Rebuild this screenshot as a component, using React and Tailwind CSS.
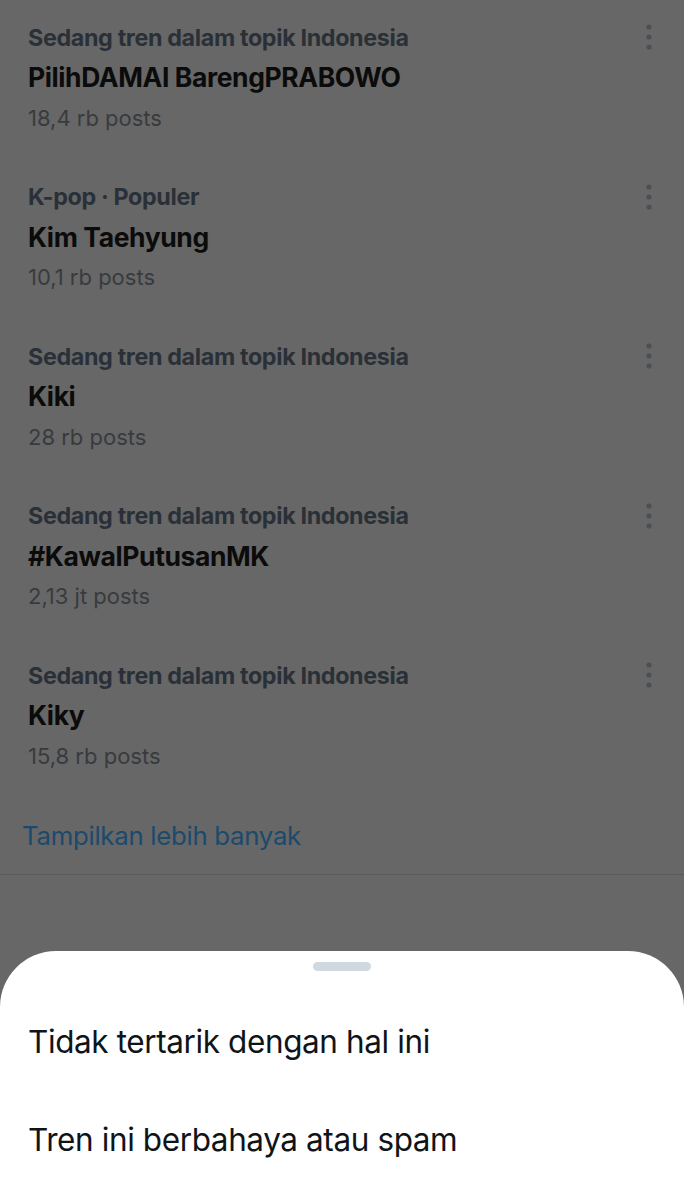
const items = [
  { cat: "Sedang tren dalam topik Indonesia", title: "PilihDAMAI BarengPRABOWO", count: "18,4 rb posts" },
  { cat: "K-pop · Populer", title: "Kim Taehyung", count: "10,1 rb posts" },
  { cat: "Sedang tren dalam topik Indonesia", title: "Kiki", count: "28 rb posts" },
  { cat: "Sedang tren dalam topik Indonesia", title: "#KawalPutusanMK", count: "2,13 jt posts" },
  { cat: "Sedang tren dalam topik Indonesia", title: "Kiky", count: "15,8 rb posts" },
];

function Dots() {
  return (
    <svg width="10" height="26" viewBox="0 0 10 26" className="mt-[-2px]">
      <circle cx="5" cy="3" r="2.6" fill="#4b5056" />
      <circle cx="5" cy="13" r="2.6" fill="#4b5056" />
      <circle cx="5" cy="23" r="2.6" fill="#4b5056" />
    </svg>
  );
}

export default function App() {
  return (
    <div
      className="w-[684px] h-[1200px] bg-[#676767] overflow-hidden flex flex-col relative"
      style={{ fontFamily: "Inter, 'Noto Sans', sans-serif" }}
    >
      <div className="mt-[-2px] flex flex-col">
        {items.map((it, i) => (
          <div key={i} className="pl-[28px] pr-[30px] pt-[20px] pb-[19.5px] flex justify-between">
            <div className="flex flex-col">
              <div className="h-[40px] flex items-center text-[23.3px] font-bold text-[#2a3038] tracking-[-0.35px] whitespace-nowrap">{it.cat}</div>
              <div className="h-[40px] flex items-center text-[26.5px] font-bold text-[#0b0b0b] tracking-[-0.4px] whitespace-nowrap">{it.title}</div>
              <div className="h-[40px] flex items-center text-[22px] text-[#383b3e] whitespace-nowrap">{it.count}</div>
            </div>
            <div className="h-[40px] flex items-center">
              <Dots />
            </div>
          </div>
        ))}
      </div>
      <div className="pl-[22px] mt-[21px] h-[40px] flex items-center text-[25.8px] text-[#1b4a6c] tracking-[-0.3px]">
        Tampilkan lebih banyak
      </div>
      <div className="mt-[17px] h-px bg-[#5a5a5a]" />
      <div className="mt-auto h-[249px] bg-white rounded-t-[56px] flex flex-col">
        <div className="flex justify-center pt-[11px]">
          <div className="w-[58px] h-[9px] rounded-full bg-[#d1d9e0]" />
        </div>
        <div className="pl-[28px] mt-[46px] h-[50px] flex items-center text-[31.5px] text-[#0f1419] tracking-[-0.4px] whitespace-nowrap">
          Tidak tertarik dengan hal ini
        </div>
        <div className="pl-[28px] mt-[48px] h-[50px] flex items-center text-[31.5px] text-[#0f1419] tracking-[-0.4px] whitespace-nowrap">
          Tren ini berbahaya atau spam
        </div>
      </div>
    </div>
  );
}
